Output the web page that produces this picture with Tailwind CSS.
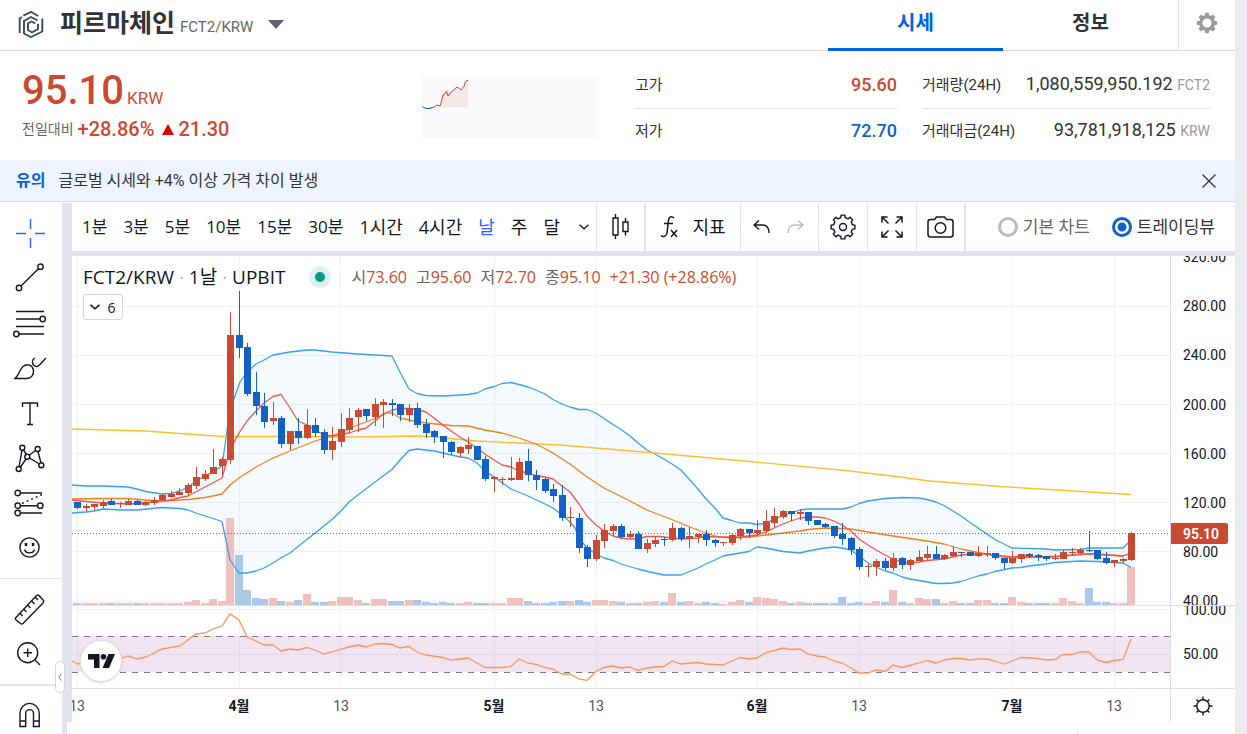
<!DOCTYPE html>
<html lang="ko">
<head>
<meta charset="utf-8">
<meta name="viewport" content="width=device-width, initial-scale=1">
<title>피르마체인 FCT2/KRW</title>
<script src="https://cdn.jsdelivr.net/npm/@tailwindcss/browser@4"></script>
</head>
<body class="h-screen overflow-hidden bg-[#e9ecf1] pr-3 font-[Roboto,'Noto_Sans_CJK_KR',sans-serif] text-[#333]">
<div class="flex h-full flex-col bg-white">

  <header class="flex h-[51px] shrink-0 border-b border-[#dadce0]">
    <div class="flex flex-1 items-center pb-[2px] pl-[18px]">
      <svg class="mr-4 h-[27px] w-[26px]" viewBox="0 0 26 27" fill="none" stroke="#3c4c5e" stroke-width="1.900">
        <path d="M1.700 22V7.500L4 6M5.300 4.600L13 1L20.300 5"/><path d="M24.300 7.500V20.500L13 26L6 22.500V10L13 6L19.500 9.500"/>
        <path d="M20 13V18L14 21.500L10 19V12.500L13.500 10.500L17.500 12.500"/>
      </svg>
      <h1 class="text-[25px] leading-8 font-bold">피르마체인</h1>
      <span class="ml-[5px] pt-[6px] text-[15px] leading-5 text-[#666]">FCT2/KRW</span>
      <button class="ml-[15px]" aria-label="마켓 선택"><svg class="h-[9px] w-4" viewBox="0 0 16 9"><path d="M0 0H16L8 9Z" fill="#5d6273"/></svg></button>
    </div>
    <nav class="flex text-[20px] leading-8 font-bold">
      <a href="#price" class="relative w-[175px] pt-[7px] text-center text-[#0062df]">시세<span class="absolute inset-x-0 -bottom-px h-[3px] bg-[#0062df]"></span></a>
      <a href="#info" class="w-[175px] pt-[7px] text-center">정보</a>
      <button class="flex w-[57px] justify-center border-l border-[#dfe0e6] pt-3" aria-label="설정">
        <svg class="h-[22px] w-[22px]" viewBox="-11 -11 22 22"><g fill="#999"><path fill-rule="evenodd" d="M0-8a8 8 0 1 0 .01 0ZM0-4.600a4.600 4.600 0 1 1-.01 0Z"/><g id="tooth"><rect x="-2" y="-10.200" width="4" height="4" rx="1"/><rect x="-2" y="6.200" width="4" height="4" rx="1"/></g><use href="#tooth" transform="rotate(45)"/><use href="#tooth" transform="rotate(90)"/><use href="#tooth" transform="rotate(135)"/></g></svg>
      </button>
    </nav>
  </header>

  <section class="flex h-[109px] shrink-0 pr-[25px]">
    <div class="w-[422px] pt-4 pl-[22px] text-[#c84a31]">
      <div class="flex items-baseline gap-[3px]"><strong class="text-[40px] leading-[48px] font-medium">95.10</strong><span class="text-[17px] leading-5">KRW</span></div>
      <div class="flex items-center text-[20px] leading-7 font-medium">
        <span class="mr-1 text-[14px] font-normal text-[#666]">전일대비</span>+28.86%
        <svg class="mr-1 ml-2 h-[11px] w-3" viewBox="0 0 12 11"><path d="M0 11L6 0L12 11Z" fill="#dd0000"/></svg>21.30
      </div>
    </div>
    <svg class="mt-[25px] h-[63px] w-[175px] bg-[#f9fafc]" viewBox="0 0 175 63" fill="none">
      <path d="M0 31L8 32L16 30L19 28L21 18L25 14L30 17L34 11L39 14L43 8L46 4V31Z" fill="#f5e9e7"/>
      <path d="M0 30.500L2 31.500M9 32L12 31L15 29L18 30L19 27L21 19L23 18L24.500 15L26 20L29 16L32 14L34 11.500L36 11.500L39 14L42 10.500L43 7L44.500 4.500H46" stroke="#c84a31"/>
      <path d="M2 31.500L4 32.500H8L10 31.500" stroke="#1261c4"/>
    </svg>
    <dl class="ml-[38px] flex-1 text-[18px] leading-6">
      <div class="flex h-[58px] items-end justify-between border-b border-[#e1e1e9] pb-[11px]"><dt class="text-[15px]">고가</dt><dd class="font-medium text-[#c84a31]">95.60</dd></div>
      <div class="flex h-[34px] items-end justify-between"><dt class="text-[15px]">저가</dt><dd class="font-medium text-[#1261c4]">72.70</dd></div>
    </dl>
    <dl class="ml-[25px] w-[288px] text-[18px] leading-6">
      <div class="flex h-[58px] items-end justify-between border-b border-[#e1e1e9] pb-[11px]"><dt class="text-[15px]">거래량(24H)</dt><dd>1,080,559,950.192 <i class="text-[14px] text-[#999] not-italic">FCT2</i></dd></div>
      <div class="flex h-[34px] items-end justify-between"><dt class="text-[15px]">거래대금(24H)</dt><dd>93,781,918,125 <i class="text-[14px] text-[#999] not-italic">KRW</i></dd></div>
    </dl>
  </section>

  <section class="flex h-[42px] shrink-0 items-center border-b border-[#d9dce6] bg-[#edf4ff] pt-px pr-[19px] pl-4 text-[16px]">
    <strong class="mr-[13px] text-[#0062df]">유의</strong><span class="flex-1">글로벌 시세와 +4% 이상 가격 차이 발생</span>
    <button aria-label="닫기"><svg class="h-[14px] w-[14px]" viewBox="0 0 14 14"><path d="M.5.5L13.500 13.500M13.500.5L.5 13.500" stroke="#444" stroke-width="1.500"/></svg></button>
  </section>

  <main class="flex min-h-0 flex-1 pt-px font-['Open_Sans','Noto_Sans_CJK_KR',sans-serif]">
    <aside class="relative w-[67px] shrink-0 border-r-5 border-[#e0e3eb]">
      <div class="flex flex-col pt-[7px] text-[#131722] [&>button]:flex [&>button]:h-[45px] [&>button]:items-center [&>button]:pl-3 [&_svg]:h-9 [&_svg]:w-9 [&_svg]:fill-none [&_svg]:stroke-current [&_svg]:[stroke-width:1.4]">
        <button aria-label="십자선" class="text-[#2962ff]"><svg viewBox="0 0 36 36"><path d="M4 18.500h10M23 18.500h10M18.500 4v10M18.500 23v10"/></svg></button>
        <button aria-label="추세선"><svg viewBox="0 0 36 36"><circle cx="7" cy="28" r="2.700"/><circle cx="28.500" cy="6.700" r="2.700"/><path d="M9 26L26.500 8.700"/></svg></button>
        <button aria-label="피보나치"><svg viewBox="0 0 36 36"><path d="M4 6.500h28M4 14h24M4 21.500h28M7 29h25"/><circle cx="30.700" cy="14" r="2.700"/><circle cx="4.300" cy="29" r="2.700"/></svg></button>
        <button aria-label="브러시"><svg viewBox="0 0 36 36"><path d="M3 28.500C8 24 7 20 11 16.500C15 13 20.500 15 21.500 20C22 25 19 28.500 15 28.500ZM22.500 8C20 10 20 13 21.500 15C23.500 17.500 26 16.500 27.500 15L34 8"/></svg></button>
        <button aria-label="텍스트"><svg viewBox="0 0 36 36"><path d="M10.500 12V8H25.500V12M18 8V29.500M15 29.500H21"/></svg></button>
        <button aria-label="패턴"><svg viewBox="0 0 36 36"><path d="M7 27L10 10M11.500 10L14.500 14.500M17.500 15L23.500 10.500M26 11.500L29 23M8.500 27L14 19M17.500 18L27.500 24"/><circle cx="6.700" cy="29" r="2.500"/><circle cx="10.300" cy="7.700" r="2.500"/><circle cx="15.300" cy="16.700" r="2.500"/><circle cx="25.700" cy="9" r="2.500"/><circle cx="29.300" cy="25.300" r="2.500"/></svg></button>
        <button aria-label="예측"><svg viewBox="0 0 36 36"><path d="M8.500 8H30M8.500 20.700H25.500M8.500 28H30"/><path d="M10 18.500L30 9.500" stroke-dasharray="2 3"/><circle cx="5.700" cy="8" r="2.700"/><circle cx="5.700" cy="20.700" r="2.700"/><circle cx="5.700" cy="28" r="2.700"/><circle cx="28.300" cy="20.700" r="2.700"/></svg></button>
        <button aria-label="아이콘"><svg viewBox="0 0 36 36"><circle cx="17.500" cy="17.500" r="9.600"/><path d="M12.500 19.500C14 24 21 24 22.500 19.500"/><path d="M14 13v3M21 13v3" stroke-width="2.500"/></svg></button>
      </div>
      <hr class="mt-2 border-[#e0e3eb]">
      <div class="flex flex-col pt-[7px] text-[#131722] [&>button]:flex [&>button]:h-[45px] [&>button]:items-center [&>button]:pl-3 [&_svg]:h-9 [&_svg]:w-9 [&_svg]:fill-none [&_svg]:stroke-current [&_svg]:[stroke-width:1.4]">
        <button aria-label="측정"><svg viewBox="0 0 36 36"><path d="M3.500 27L24.500 4.500Q26 3.500 27 4.500L31.500 9.500Q32 11 31 12L11 32.500Q9.500 33.500 8.500 32.500L3.500 28.500ZM8 22.500L10.500 25M12 18.500L14.500 21M16 14.500L18.500 17M20 10.500L22.500 13M23.500 6.500L26 9"/></svg></button>
        <button aria-label="확대"><svg viewBox="0 0 36 36"><circle cx="15.700" cy="16.700" r="10"/><path d="M23 24L28 29M11.500 16.700H20M15.700 12.500V21"/></svg></button>
      </div>
      <hr class="mt-2 border-t-2 border-[#e0e3eb]">
      <button aria-label="자석 모드" class="mt-[11px] flex pl-3 text-[#131722]"><svg class="h-9 w-9" viewBox="0 0 36 36" fill="none" stroke="currentColor" stroke-width="1.400"><path d="M8 29.500V16a9.600 9.600 0 0 1 19.200 0V29.500H21.500V16.500a3.900 3.900 0 0 0-7.800 0V29.500ZM8 24H13.700M21.500 24H27"/></svg></button>
      <button aria-label="도구 접기" class="absolute top-[458px] -right-[3px] z-10 flex h-8 w-[10px] items-center justify-center rounded-[5px] border border-[#d1d4dc] bg-white"><svg class="h-2 w-1" viewBox="0 0 4 8"><path d="M3.500.5L.8 4L3.500 7.500" fill="none" stroke="#787b86"/></svg></button>
    </aside>

    <div class="flex min-w-0 flex-1 flex-col">
      <div class="flex h-[53px] shrink-0 items-stretch border-b-5 border-l-5 border-[#e0e3eb] text-[17px] text-[#131722] [&_svg]:fill-none [&_svg]:stroke-current">
        <div class="flex w-[525px] shrink-0 items-center gap-4 border-r border-[#e0e3eb] pl-[10px] whitespace-nowrap">
          <button>1분</button><button>3분</button><button>5분</button><button>10분</button><button>15분</button><button>30분</button><button class="text-[18px]">1시간</button><button class="text-[18px]">4시간</button><button class="text-[18px] text-[#2962ff]">날</button><button class="text-[18px]">주</button><button class="text-[18px]">달</button>
          <button aria-label="더보기" class="pl-[3px]"><svg class="h-[6px] w-[10px]" viewBox="0 0 10 6"><path d="M.5.8L5 4.800L9.500.8" stroke-width="1.300"/></svg></button>
        </div>
        <button aria-label="캔들" class="flex w-[49px] shrink-0 items-center justify-center border-r-2 border-[#e0e3eb]"><svg class="h-[26px] w-[18px]" viewBox="0 0 18 26"><path d="M1 4H6V21H1ZM3.500 0V4M3.500 21V25M11 8H16V17.500H11ZM13.500 4V8M13.500 17.500V21.500" stroke-width="1.400"/></svg></button>
        <button class="flex w-[95px] shrink-0 items-center justify-center gap-3 border-r border-[#e0e3eb] text-[18px]"><svg class="h-6 w-5" viewBox="0 0 20 24"><path d="M14 3C11.500.5 9 2 8.500 5L7 18C6.500 21.500 3 22.500 1 20.500M4 8.500H13M11 15L17 22M17 15L11 22" stroke-width="1.500"/></svg>지표</button>
        <div class="flex w-[78px] shrink-0 items-center justify-center gap-[17px] border-r border-[#e0e3eb] pr-[2px]">
          <button aria-label="실행 취소"><svg class="h-[14px] w-[17px]" viewBox="0 0 17 14"><path d="M6 .5L1 5L6 9.500M1 5H9.500C13.500 5 16 8 16 13" stroke-width="1.400"/></svg></button>
          <button aria-label="다시 실행" disabled class="text-[#b8bac2]"><svg class="h-[14px] w-[17px]" viewBox="0 0 17 14"><path d="M11 .5L16 5L11 9.500M16 5H7.500C3.500 5 1 8 1 13" stroke-width="1.400"/></svg></button>
        </div>
        <button aria-label="차트 설정" class="flex w-[49px] shrink-0 items-center justify-center border-r border-[#e0e3eb]"><svg class="h-[26px] w-[26px]" viewBox="0 0 26 26"><path id="cog" stroke-linejoin="round" stroke-width="1.400"/><circle cx="13" cy="13" r="3.500" stroke-width="1.400"/></svg></button>
        <button aria-label="전체 화면" class="flex w-[49px] shrink-0 items-center justify-center border-r border-[#e0e3eb]"><svg class="h-[22px] w-[22px]" viewBox="0 0 22 22"><path d="M1 6.500V1H6.500M1 1L7.500 7.500M15.500 1H21V6.500M21 1L14.500 7.500M1 15.500V21H6.500M1 21L7.500 14.500M15.500 21H21V15.500M21 21L14.500 14.500" stroke-width="1.500"/></svg></button>
        <button aria-label="스냅샷" class="flex w-[49px] shrink-0 items-center justify-center border-r-2 border-[#e0e3eb]"><svg class="h-[22px] w-[27px]" viewBox="0 0 27 22"><path d="M1 6Q1 3.500 3.500 3.500H7.500L9.500 1H17.500L19.500 3.500H23.500Q26 3.500 26 6V18.500Q26 21 23.500 21H3.500Q1 21 1 18.500Z" stroke-width="1.500"/><circle cx="13.500" cy="12" r="5.300" stroke-width="1.500"/></svg></button>
        <fieldset class="flex flex-1 items-center justify-end gap-[22px] pr-5 whitespace-nowrap text-[#666]">
          <label class="flex items-center gap-[5px]"><input type="radio" name="view" class="h-5 w-5 appearance-none rounded-full border-3 border-[#bbb]">기본 차트</label>
          <label class="flex items-center gap-[5px] text-[#333]"><input type="radio" name="view" checked class="h-5 w-5 appearance-none rounded-full border-3 border-[#1261c4] bg-[radial-gradient(circle,#1261c4_4px,white_5px)]">트레이딩뷰</label>
        </fieldset>
      </div>

      <div class="relative grid grid-cols-[minmax(0,1fr)_65px] grid-rows-[350px_83px_33px] border-l-5 border-[#e0e3eb]">
        <svg class="h-full w-full border-b border-[#dcdee3]" viewBox="72 256 1098 349" preserveAspectRatio="none" fill="none">
          <g id="grid" stroke="#f0f1f3"></g>
          <path id="fill" fill="#2196f3" fill-opacity=".05"/>
          <g id="volumes"></g>
          <g id="lines" stroke-width="1.300" stroke-linejoin="round"></g>
          <g id="candles"></g>
          <path d="M72 533.500H1170" stroke="#c84a31" stroke-dasharray="1 2"/>
        </svg>
        <svg class="h-full w-full border-b border-l border-[#dcdee3] font-[Roboto,sans-serif] text-[14px]" viewBox="1171 256 64 349" preserveAspectRatio="xMinYMin" fill="#131722">
          <text x="1183" y="262">320.00</text><text x="1183" y="311">280.00</text><text x="1183" y="360">240.00</text><text x="1183" y="410">200.00</text><text x="1183" y="459">160.00</text><text x="1183" y="508">120.00</text><text x="1183" y="557">80.00</text><text x="1183" y="606">40.00</text>
          <path d="M1170 523H1226Q1228 523 1228 525V542Q1228 544 1226 544H1170Z" fill="#c84a31"/><text x="1183" y="539" fill="#fff" font-weight="600">95.10</text>
        </svg>
        <svg class="h-full w-full border-b border-[#dcdee3]" viewBox="72 606 1098 82" preserveAspectRatio="none" fill="none">
          <g id="grid2" stroke="#f0f1f3"></g>
          <path d="M72 636H1170V672H72Z" fill="#800080" fill-opacity=".1"/>
          <path d="M72 636.500H1170M72 672.500H1170" stroke="#787b86" stroke-dasharray="6 6"/>
          <g id="rsi" stroke-width="1.300"></g>
        </svg>
        <svg class="h-full w-full border-b border-l border-[#dcdee3] font-[Roboto,sans-serif] text-[14px]" viewBox="1171 606 64 82" preserveAspectRatio="xMinYMin" fill="#131722"><text x="1183" y="615">100.00</text><text x="1183" y="659">50.00</text></svg>
        <svg class="h-full w-full font-[Roboto,'Noto_Sans_CJK_KR',sans-serif] text-[14px]" viewBox="72 689 1098 33" fill="#131722" text-anchor="middle">
          <g fill="#50535e"><text x="77" y="711">13</text><text x="341" y="711">13</text><text x="596" y="711">13</text><text x="859" y="711">13</text><text x="1114" y="711">13</text></g>
          <g font-weight="700"><text x="239" y="711">4월</text><text x="494" y="711">5월</text><text x="757" y="711">6월</text><text x="1012" y="711">7월</text></g>
        </svg>
        <button aria-label="축 설정" class="flex items-center justify-center border-l border-[#dcdee3]"><svg class="h-5 w-5" viewBox="-10 -10 20 20" fill="none" stroke="#131722" stroke-width="1.400"><circle r="6.200"/><path d="M0-6V-9.500M0 6V9.500M-6 0H-9.500M6 0H9.500M4.400-4.400L6.500-6.500M-4.400-4.400L-6.500-6.500M4.400 4.400L6.500 6.500M-4.400 4.400L-6.500 6.500"/></svg></button>

        <div class="absolute top-2 left-[11px] flex items-center whitespace-nowrap text-[#131722]">
          <h2 class="text-[19px] leading-[26px]">FCT2/KRW <span class="text-[#b2b5be]">·</span> 1날 <span class="text-[#b2b5be]">·</span> UPBIT</h2>
          <span class="ml-6 flex h-[22px] w-[22px] items-center justify-center rounded-full bg-[#dff1ef]"><i class="h-[10px] w-[10px] rounded-full bg-[#089981]"></i></span>
          <p class="ml-5 flex gap-[9px] text-[16px] text-[#c84a31]"><span><b class="font-normal text-[#666]">시</b>73.60</span><span><b class="font-normal text-[#666]">고</b>95.60</span><span><b class="font-normal text-[#666]">저</b>72.70</span><span><b class="font-normal text-[#666]">종</b>95.10</span><span>+21.30 (+28.86%)</span></p>
        </div>
        <button class="absolute top-[38px] left-[11px] flex h-[26px] w-10 items-center justify-center gap-[7px] rounded-[3px] border border-[#d1d4dc] bg-white text-[14px] text-[#131722]"><svg class="h-[6px] w-[10px]" viewBox="0 0 10 6"><path d="M.5.8L5 4.800L9.500.8" fill="none" stroke="#131722" stroke-width="1.600"/></svg>6</button>
        <a href="#tradingview" aria-label="TradingView" class="absolute top-[384px] left-2 flex h-[42px] w-[42px] items-center justify-center rounded-full border border-[#dcdee3] bg-white shadow-sm"><svg class="h-[14px] w-[27px]" viewBox="0 0 27 14" fill="#131722"><path d="M0 0H11.500V14H6V5.500H0Z"/><circle cx="15.500" cy="2.800" r="2.800"/><path d="M20.500 0H27L21 14H14.500Z"/></svg></a>
      </div>
      <div class="mt-[7px] ml-auto w-[158px] flex-1 border-l border-[#e0e3eb]"></div>
    </div>
  </main>
</div>

<script>
const UP = '#c84a31', DOWN = '#1261c4';
// Each candle: direction, body top, body bottom, wick top, wick bottom, volume height.
const candles = `d502 508 502 509 2|u506 508 504 512 2|u504 507 504 511 2|u502 506 500 508 2|d501 505 499 505 2|u503 504 502 508 2|u501 505 499 505 2|d501 505 500 505 2|u502 505 501 506 2|u500 503 497 505 2|u495 500 494 500 2|u494 497 491 498 2|u492 495 488 495 2|u485 493 483 495 3|u477 486 467 489 5|u474 479 470 481 2|u467 474 449 474 6|u459 466 457 475 4|u335 460 312 464 87|d335 348 291 358 50|d347 394 343 396 15|d392 406 372 415 7|d406 422 393 428 6|u418 421 402 425 7|d418 444 416 448 4|u431 444 431 450 3|d431 438 418 444 5|u425 438 409 439 11|d425 433 418 437 3|d432 450 429 454 3|u441 450 427 460 4|u429 442 413 447 8|u418 430 408 433 8|u410 417 408 432 5|d409 416 409 421 2|u404 417 398 426 6|u402 405 399 428 6|d403 405 399 416 4|d404 415 404 421 4|u408 415 404 422 5|d408 425 403 428 5|d424 433 419 438 3|d431 437 430 443 2|d436 442 436 458 3|d442 452 441 455 2|u447 453 446 457 2|u445 449 437 454 3|d446 460 446 460 2|d459 479 456 481 2|u477 479 476 492 2|u479 480 477 485 2|u478 480 457 481 7|u462 480 458 480 7|d461 475 449 481 4|d475 480 470 490 2|d479 491 478 493 2|d489 496 484 502 3|d495 518 485 521 4|u517 518 507 527 4|d518 548 513 553 5|d547 559 545 567 3|u540 559 535 561 5|u530 541 524 548 5|u526 531 524 536 4|d526 537 524 539 3|u534 537 531 538 2|d534 549 531 549 2|u543 549 539 553 3|u540 544 537 547 4|d539 540 537 546 3|u528 540 523 541 12|d528 539 527 541 3|u536 539 527 548 4|u534 537 534 543 2|d534 540 530 546 3|d540 543 539 547 2|u542 543 542 546 1|u535 543 534 545 3|u529 536 528 540 5|d529 533 529 538 3|u530 533 520 536 8|u521 531 510 533 7|u516 523 508 527 6|u511 517 510 519 4|d511 514 511 521 2|u512 514 509 520 3|d512 521 512 525 2|d520 525 520 525 2|d524 527 523 528 2|d526 536 526 538 2|d534 539 523 545 8|d538 550 537 555 2|d549 567 547 570 3|u566 567 563 577 2|u561 567 559 576 4|d561 568 558 570 3|u558 568 553 571 15|d558 565 557 569 3|u560 565 559 570 2|u557 561 550 561 7|u554 558 546 560 6|d554 559 546 559 6|u555 559 554 560 2|u552 556 547 557 4|d552 553 552 557 2|d552 556 552 556 2|u553 556 546 557 5|u553 554 546 557 5|d553 558 553 560 2|d558 563 558 569 2|u558 563 551 564 8|u554 559 554 563 3|d554 556 553 558 2|d555 557 554 561 2|d556 559 556 561 2|u558 559 554 560 2|u552 559 550 559 7|u552 553 548 556 4|u550 553 548 555 2|d550 551 531 552 17|d550 559 550 560 3|d558 563 552 564 3|u560 563 560 567 2|u559 561 558 564 2|u533 560 532 561 38`.split('|');
const upper = '72,485 86,486 103,486 128,487 137,489 146,491.5 162,494 171,493.5 180,491 188,487 196,481 205,476 213,472 222,466 230,410 240,382 247,372 256,364 264,360 273,355 290,352 307,350 315,350 332,352 358,354 392,356 400.5,373 409,389 417,393.5 426,395.5 443,396 460,395 468,394.5 477,393 485,389 494,386.5 502,383.5 511,382.5 519,384.5 528,387 536,390 545,394 553,399.5 562,404 570,407 579,409.5 587,409.5 596,413 604,418.5 613,424.5 621,429.5 630,436 638,443 647,450 655,454 664,459 672,464 681,470 689,479 698,489 706,499 715,508 723,518 732,520.5 740,523 749,523 757,524.5 766,523 774,519 791,513 800,510 808,509 842,509 851,507 859,503.5 868,501 885,498.5 902,497.5 919,498 927,499.5 936,502 944,505.5 953,511 961,516 970,522.5 987,534 995,539.5 1012,548 1046,549 1055,550 1080,549.5 1089,548 1123,548 1131,540';
const lower = '72,513 86,512 94,511 103,509 120,510 137,510 162,507.5 180,508.5 188,510 196,513 213,518.5 222,521.5 230,560 239,573 247,573 256,571 264,568 273,563 281,558 290,553 298,546.5 319,530 332.5,519 341,511 349,502 358,495 366,489 375,482 392,469.5 400,460 409,450.5 417,449 434,451 443,453 460,457 468,458 477,463 485,471 494,477 511,489 528,496 545,504 553,508 562,515 570,522 575,528 579,538 587,548 596,554 604,558 613,560.5 621,564 638,569 650,572 664,575 681,575 698,568 706,564 715,560 723,556 749,551.5 757,547 766,548 783,551.5 800,553 808,551 825,548 834,547 842,548 851,550 859,556 868,563 876,567 885,571 893,573 902,577 910,579 927,582 936,583.5 944,583.5 953,583 961,581.5 978,576 987,574 995,571.5 1012,568 1021,567.5 1029,566 1046,564 1055,562.5 1080,561 1097,561.5 1123,563 1131,567.5';
const basis = '72,499 103,498.5 128,498.5 145,500 162,501 188,499.5 205,497.5 222,494 230,485 239,478 256,467 273,458 290,451 315,441 332,436 358,425 375,418.5 387,413 392,413 400,418 409,420 417,421.5 426,423 451,425.5 468,426 485,430 502,433 519,438 536,444 553,453 562,459 570,464 587,477 604,488 630,501 647,510 660,515 673,520 690,527 706,533 719,537 732,538 749,537 766,535 783,533 800,531 808,529.5 825,528 851,529 868,532 893,536 927,541 944,544 961,549 978,552.5 995,555.5 1012,558 1038,557 1063,556 1089,554 1106,555 1123,556 1131,553';
const fast = '72,500 86,501.5 103,503 128,504 145,503 162,501 171,500 180,497.5 188,496 205,487 222,478 230,450 239,433 247,421 256,411 264,403 273,396.5 281,394.5 290,408 298,421 307,425 315,430 324,435 332,436 349,433 358,430 366,428 375,421 383,414 392,410 400,408.5 409,408.5 417,409.5 426,412 434,418 443,425 451,431 460,437 468,442 477,448 485,454 494,460 502,465 511,467 519,471 528,473 536,475.5 545,477 553,479 562,486 570,492 579,504 587,516 596,525 604,531 613,536 621,538 630,539 638,538.5 647,536.5 660,536.5 664,537 681,539 698,538 706,536.5 723,537 740,537 757,535 766,532 774,528 783,524 791,521 800,518 808,517 817,517 825,518 834,521 842,525 851,531 859,539 868,545 876,550 885,555 893,559 902,562 910,563 919,562 927,560.5 944,559 961,555 978,553.5 995,555 1012,557 1021,556 1046,557.5 1063,556 1080,554 1097,554 1123,556 1131,553';
const slow = '72,429 145,431 222,436.5 290,436.5 358,437 417,436 434,437 477,441 560,445 596,448 655,453 750,461.5 850,471 900,477 930,481 1000,486.5 1131,494.5';
const rsi = '72,661 78,664 86,662 103,661 122,658 128,656 137,659 146,657 154,653 162,649 180,646 188,640 196,634 205,633 213,629 222,626 230,614 239,620 247,637 256,641 264,645 273,645 281,651 290,649 298,650 307,647.5 315,650 324,654 332,652 341,649 349,647 358,645 366,647 375,644 383,643.5 392,644.5 400,648 409,646.5 417,652 426,655 443,657.5 451,660 468,658 477,663 485,667.5 502,667.5 511,666.5 519,659 528,663 536,664.5 545,667.5 553,669 562,674 570,674 579,679 587,680.5 596,671.5 604,667.5 613,666 621,668 630,667 638,670.5 647,668 655,667 664,666.5 672,661 681,664 698,662.5 706,664 723,665 732,661 740,657.5 749,659 757,658 766,652.5 774,650.5 783,648 791,649.5 800,649 808,654 817,656 825,657 834,661 842,663 851,668 859,673 868,673 876,670 885,671.5 893,665 902,667.5 919,663 927,660.5 936,663 944,660 953,658.5 961,658.5 970,660 978,659 987,659 995,661 1004,664 1021,657.5 1038,658.5 1046,660 1055,659.5 1063,654.5 1072,654.5 1080,652 1089,652 1097,660 1106,662.5 1114,660.5 1123,659.5 1131,639';
const el = id => document.getElementById(id);
const line = (pts, color) => `<polyline points="${pts}" stroke="${color}"/>`;
const cols = [77.5, 239.5, 340.5, 494.5, 596.5, 757.5, 859.5, 1012.5, 1114.5];
el('grid').innerHTML = [306.5, 355.5, 404.5, 453.5, 502.5, 551.5, 601.5].map(y => `<path d="M72 ${y}H1170"/>`).join('') + cols.map(x => `<path d="M${x} 256V605"/>`).join('');
el('grid2').innerHTML = [609.5, 654.5].map(y => `<path d="M72 ${y}H1170"/>`).join('') + cols.map(x => `<path d="M${x} 606V688"/>`).join('');
el('fill').setAttribute('d', 'M' + upper + ' ' + lower.split(' ').reverse().join(' ') + 'Z');
el('lines').innerHTML = line(upper, '#3b9ff0') + line(lower, '#3b9ff0') + line(slow, '#fbc02d') + line(basis, '#f57f17') + line(fast, '#f0564c');
el('rsi').innerHTML = line(rsi, '#f7955d');
let bars = '', body = '';
candles.forEach((c, i) => {
  const up = c[0] === 'u', [t, b, h, l, v] = c.slice(1).split(' ').map(Number), x = Math.floor(77.5 + 8.5 * i);
  bars += `<rect x="${x - 4}" y="${605 - v}" width="8" height="${v}" fill="${up ? '#efc0bc' : '#abc8eb'}"/>`;
  body += `<g fill="${up ? UP : DOWN}"><rect x="${x}" y="${h}" width="1" height="${l - h}"/><rect x="${x - 3}" y="${t}" width="7" height="${b - t}"/></g>`;
});
el('volumes').innerHTML = bars;
el('candles').innerHTML = body;

// Eight-toothed outline of the settings cog.
let d = '';
for (let k = 0; k < 8; k++) for (const [a, r] of [[-13, 9.600], [-9, 12], [9, 12], [13, 9.600]]) {
  const t = (k * 45 + a) * Math.PI / 180;
  d += (d ? 'L' : 'M') + (13 + r * Math.sin(t)).toFixed(1) + ' ' + (13 - r * Math.cos(t)).toFixed(1);
}
el('cog').setAttribute('d', d + 'Z');
</script>
</body>
</html>
